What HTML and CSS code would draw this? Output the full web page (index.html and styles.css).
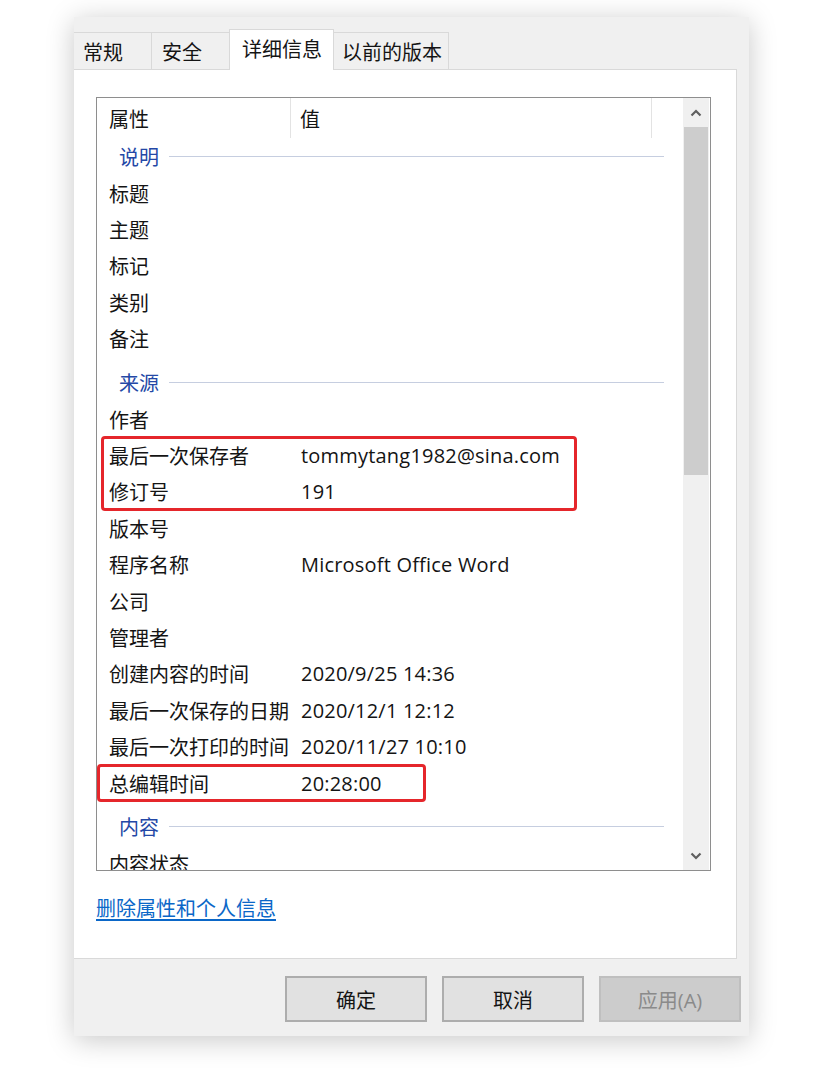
FILE: index.html
```html
<!DOCTYPE html>
<html lang="zh-CN">
<head>
<meta charset="utf-8">
<title>属性 - 详细信息</title>
<link rel="stylesheet" href="styles.css">
</head>
<body>
<div class="page">
  <div class="dialog">
    <div class="tabs">
      <div class="tab tab-general">常规</div>
      <div class="tab tab-security">安全</div>
      <div class="tab tab-details active">详细信息</div>
      <div class="tab tab-versions">以前的版本</div>
    </div>
    <div class="panel">
      <div class="list">
        <div class="list-body">
          <div class="list-header">
            <div class="hcol hcol-name">属性</div>
            <div class="hcol hcol-value">值</div>
          </div>
          <div class="group first"><span class="group-title">说明</span><span class="group-line"></span></div>
          <div class="row"><span>标题</span><span></span></div>
          <div class="row"><span>主题</span><span></span></div>
          <div class="row"><span>标记</span><span></span></div>
          <div class="row"><span>类别</span><span></span></div>
          <div class="row"><span>备注</span><span></span></div>
          <div class="group"><span class="group-title">来源</span><span class="group-line"></span></div>
          <div class="row"><span>作者</span><span></span></div>
          <div class="row"><span>最后一次保存者</span><span class="val">tommytang1982@sina.com</span></div>
          <div class="row"><span>修订号</span><span class="val">191</span></div>
          <div class="row"><span>版本号</span><span></span></div>
          <div class="row"><span>程序名称</span><span class="val">Microsoft Office Word</span></div>
          <div class="row"><span>公司</span><span></span></div>
          <div class="row"><span>管理者</span><span></span></div>
          <div class="row"><span>创建内容的时间</span><span class="val">2020/9/25 14:36</span></div>
          <div class="row"><span>最后一次保存的日期</span><span class="val">2020/12/1 12:12</span></div>
          <div class="row"><span>最后一次打印的时间</span><span class="val">2020/11/27 10:10</span></div>
          <div class="row"><span>总编辑时间</span><span class="val">20:28:00</span></div>
          <div class="group"><span class="group-title">内容</span><span class="group-line"></span></div>
          <div class="row"><span>内容状态</span><span></span></div>
        </div>
        <div class="scrollbar">
          <div class="sb-btn">
            <svg width="12" height="8" viewBox="0 0 12 8"><polyline points="1.5,6.5 6,2 10.5,6.5" fill="none" stroke="#5f5f5f" stroke-width="2.2"/></svg>
          </div>
          <div class="sb-thumb"></div>
          <div class="sb-track"></div>
          <div class="sb-btn">
            <svg width="12" height="8" viewBox="0 0 12 8"><polyline points="1.5,1.5 6,6 10.5,1.5" fill="none" stroke="#5f5f5f" stroke-width="2.2"/></svg>
          </div>
        </div>
      </div>
      <a class="remove-link" href="#">删除属性和个人信息</a>
    </div>
    <div class="footer">
      <div class="btn">确定</div>
      <div class="btn">取消</div>
      <div class="btn disabled">应用(A)</div>
    </div>
  </div>
  <div class="mark mark-saver"></div>
  <div class="mark mark-edit"></div>
</div>
</body>
</html>
```

FILE: styles.css
```css
html, body {
  margin: 0;
  padding: 0;
  background: #ffffff;
}

body {
  font-family: "Open Sans", "Noto Sans CJK SC", sans-serif;
  font-size: 20px;
  color: #141414;
}

.page {
  position: relative;
  padding: 17px 0 0 74px;
  width: 828px;
  height: 1076px;
  box-sizing: border-box;
  overflow: hidden;
}

.dialog {
  width: 675px;
  background: #f0f0f0;
  box-shadow: 0 4px 26px rgba(0, 0, 0, 0.22);
}

/* tabs */
.tabs {
  display: flex;
  align-items: flex-end;
  height: 52px;
}

.tab {
  position: relative;
  height: 37px;
  box-sizing: border-box;
  border: 1px solid #d9d9d9;
  border-bottom: none;
  margin-right: -1px;
  display: flex;
  align-items: center;
  background: #f0f0f0;
  color: #141414;
  white-space: nowrap;
}

.tab-general { width: 78px; padding-left: 9px; border-left: none; }
.tab-security { width: 79px; padding-left: 10px; }
.tab-details { width: 105px; padding-left: 12px; }
.tab-versions { width: 116px; padding-left: 8px; }

.tab.active {
  height: 41px;
  margin-bottom: -1px;
  background: #ffffff;
  z-index: 2;
  padding-bottom: 3px;
}

/* white panel */
.panel {
  width: 663px;
  height: 890px;
  box-sizing: border-box;
  background: #ffffff;
  border: 1px solid #d9d9d9;
  border-left: none;
  padding: 27px 0 0 22px;
}

.list {
  width: 615px;
  height: 774px;
  box-sizing: border-box;
  border: 1px solid #8e8e8e;
  display: flex;
  background: #ffffff;
}

.list-body {
  flex: 1;
  overflow: hidden;
}

.list-header {
  display: flex;
  height: 40px;
}

.hcol {
  display: flex;
  align-items: center;
  box-sizing: border-box;
  border-right: 1px solid #e3e3e3;
}

.hcol-name { width: 194px; padding-left: 12px; }
.hcol-value { width: 361px; padding-left: 9px; }

.group {
  display: flex;
  align-items: center;
  height: 37px;
  margin-top: 7px;
  padding: 0 19px 0 22px;
}

.group.first { margin-top: 0; }

.group-title {
  color: #2448a6;
  white-space: nowrap;
}

.group-line {
  flex: 1;
  height: 1px;
  margin-left: 10px;
  background: #c6cee0;
}

.row {
  display: grid;
  grid-template-columns: 192px 1fr;
  align-items: center;
  height: 36.4px;
  padding-left: 12px;
  white-space: nowrap;
}

.val {
  letter-spacing: 0.2px;
}

/* scrollbar */
.scrollbar {
  width: 26px;
  margin-right: 1px;
  display: flex;
  flex-direction: column;
  background: #f0f0f0;
}

.sb-btn {
  height: 29px;
  display: flex;
  align-items: center;
  justify-content: center;
  flex-shrink: 0;
}

.sb-thumb {
  height: 348px;
  margin: 0 1px;
  background: #cdcdcd;
  flex-shrink: 0;
}

.sb-track {
  flex: 1;
}

/* link */
.remove-link {
  display: inline-block;
  margin-top: 26px;
  line-height: 24px;
  color: #0b67c8;
  text-decoration: underline;
  text-underline-offset: 3px;
}

/* footer buttons */
.footer {
  display: flex;
  justify-content: flex-end;
  gap: 15px;
  padding: 17px 8px 14px 0;
}

.btn {
  width: 142px;
  height: 46px;
  box-sizing: border-box;
  border: 2px solid #adadad;
  background: #e1e1e1;
  display: flex;
  align-items: center;
  justify-content: center;
  color: #141414;
}

.btn.disabled {
  background: #cccccc;
  border-color: #bfbfbf;
  color: #8a8a8a;
}

/* red annotation boxes */
.mark {
  position: absolute;
  box-sizing: border-box;
  border: 3.5px solid #e5262b;
  border-radius: 4px;
}

.mark-saver {
  left: 101px;
  top: 436px;
  width: 476px;
  height: 75px;
}

.mark-edit {
  left: 97px;
  top: 764px;
  width: 329px;
  height: 38px;
}
```
